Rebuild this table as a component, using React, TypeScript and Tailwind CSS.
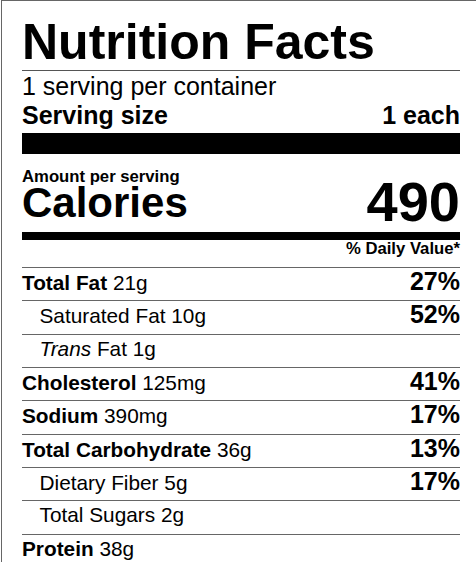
// App.tsx — nutrition facts label

type Row = {
  label: string;
  amount: string;
  dv?: string;
  bold?: boolean;
  indent?: boolean;
  italic?: string;
};

const rows: Row[] = [
  { label: 'Total Fat', amount: '21g', dv: '27%', bold: true },
  { label: 'Saturated Fat', amount: '10g', dv: '52%', indent: true },
  { label: 'Fat', amount: '1g', indent: true, italic: 'Trans' },
  { label: 'Cholesterol', amount: '125mg', dv: '41%', bold: true },
  { label: 'Sodium', amount: '390mg', dv: '17%', bold: true },
  { label: 'Total Carbohydrate', amount: '36g', dv: '13%', bold: true },
  { label: 'Dietary Fiber', amount: '5g', dv: '17%', indent: true },
  { label: 'Total Sugars', amount: '2g', indent: true },
  { label: 'Protein', amount: '38g', bold: true },
];

export default function App() {
  return (
    <div className="w-[476px] h-[562px] overflow-hidden bg-white">
      <div
        className="ml-px w-[520px] border-l border-t border-[#666] pl-[20px] text-black"
        style={{ fontFamily: '"Liberation Sans", Arial, sans-serif' }}
      >
        <div className="w-[438px]">
          {/* Header */}
          <h1 className="pt-[16px] text-[50px] leading-[50px] font-bold">Nutrition Facts</h1>
          <div className="mt-[3px] border-t border-[#555]" />

          <div className="mt-px text-[25px] leading-[29px]">1 serving per container</div>
          <div className="flex justify-between text-[25px] leading-[29px] font-bold">
            <span>Serving size</span>
            <span>1 each</span>
          </div>

          <div className="mt-[3px] h-[21px] bg-black" />

          {/* Calories */}
          <div className="flex justify-between items-end h-[78px] pb-[2px] font-bold">
            <div className="mb-[8px]">
              <div className="text-[16.7px] leading-[14px]">Amount per serving</div>
              <div className="text-[42px] leading-[38px]">Calories</div>
            </div>
            <div className="text-[56px] leading-[56px]">490</div>
          </div>

          <div className="h-[8px] bg-black" />

          <div className="h-[27px] text-right text-[16.7px] leading-[18px] font-bold">
            % Daily Value*
          </div>

          {/* Nutrients */}
          {rows.map((r) => (
            <div
              key={r.label}
              className="flex justify-between items-baseline h-[33.33px] border-t border-[#666] pt-px leading-[25px]"
            >
              <span className={`text-[20.8px] ${r.indent ? 'pl-[17.5px]' : ''}`}>
                {r.italic && <i>{r.italic} </i>}
                <span className={r.bold ? 'font-bold' : ''}>{r.label}</span> {r.amount}
              </span>
              {r.dv && <span className="text-[25px] font-bold">{r.dv}</span>}
            </div>
          ))}
        </div>
      </div>
    </div>
  );
}
